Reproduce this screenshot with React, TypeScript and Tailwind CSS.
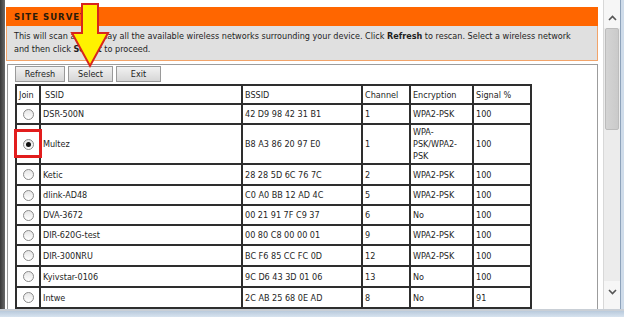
import React from "react";

const font = { fontFamily: '"DejaVu Sans Condensed", "Liberation Sans", sans-serif' };

type Row = { ssid: string; bssid: string; ch: string; enc: React.ReactNode; sig: string; h: number; sel?: boolean };

const rows: Row[] = [
  { ssid: "DSR-500N", bssid: "42 D9 98 42 31 B1", ch: "1", enc: "WPA2-PSK", sig: "100", h: 20 },
  { ssid: "Multez", bssid: "B8 A3 86 20 97 E0", ch: "1", enc: (<>WPA-<br />PSK/WPA2-<br />PSK</>), sig: "100", h: 40, sel: true },
  { ssid: "Ketic", bssid: "28 28 5D 6C 76 7C", ch: "2", enc: "WPA2-PSK", sig: "100", h: 21 },
  { ssid: "dlink-AD48", bssid: "C0 A0 BB 12 AD 4C", ch: "5", enc: "WPA2-PSK", sig: "100", h: 20 },
  { ssid: "DVA-3672", bssid: "00 21 91 7F C9 37", ch: "6", enc: "No", sig: "100", h: 20 },
  { ssid: "DIR-620G-test", bssid: "00 80 C8 00 00 01", ch: "9", enc: "WPA2-PSK", sig: "100", h: 20 },
  { ssid: "DIR-300NRU", bssid: "BC F6 85 CC FC 0D", ch: "12", enc: "WPA2-PSK", sig: "100", h: 21 },
  { ssid: "Kyivstar-0106", bssid: "9C D6 43 3D 01 06", ch: "13", enc: "No", sig: "100", h: 21 },
  { ssid: "Intwe", bssid: "2C AB 25 68 0E AD", ch: "8", enc: "No", sig: "91", h: 21 },
  { ssid: "", bssid: "", ch: "", enc: "", sig: "", h: 21 },
];

function Radio({ on }: { on?: boolean }) {
  return (
    <span className="mx-auto flex h-[11px] w-[11px] items-center justify-center rounded-full border border-[#8a8a8a] bg-gradient-to-b from-[#e6e6e6] to-white">
      {on && <span className="h-[5px] w-[5px] rounded-full bg-[#111]" />}
    </span>
  );
}

function Btn({ label, w }: { label: string; w: string }) {
  return (
    <button className={`${w} h-[16px] border border-[#9a9a9a] bg-gradient-to-b from-[#f2f2f2] to-[#d6d6d6] text-[9px] leading-none text-[#222]`}>
      {label}
    </button>
  );
}

const cell = "border-2 border-[#2e2e2e] px-[2px] py-0 text-left align-middle";

export default function App() {
  return (
    <div className="relative h-[317px] w-[624px] overflow-hidden bg-white text-[#1e1e1e]" style={font}>
      <div className="flex h-[309px]">
        <div className="w-[5px] bg-gradient-to-r from-[#3a3a3a] to-[#6a6a6a]" />
        <div className="w-[598px] overflow-hidden pl-[1px] pr-[5px] pt-[7px]">
          <div className="flex h-[19px] items-center bg-[#ff6600] pl-[8px] pt-[1px] text-[9.5px] font-bold tracking-[1px] text-[#2a1a0a]">
            SITE SURVEY
          </div>
          <div className="h-[35px] whitespace-nowrap border border-t-0 border-[#f2a46a] bg-[#e0e0e0] pl-[7px] pt-[4px] text-[9px] leading-[13px]">
            This will scan and display all the available wireless networks surrounding your device. Click <b>Refresh</b> to rescan. Select a wireless network
            <br />
            and then click <b>Select</b> to proceed.
          </div>
          <div className="ml-[1px] mt-[3px] h-[300px] border border-[#9c9c9c] pl-[7px] pt-[1px]">
            <div className="flex gap-[3px]">
              <Btn label="Refresh" w="w-[50px]" />
              <Btn label="Select" w="w-[45px]" />
              <Btn label="Exit" w="w-[45px]" />
            </div>
            <table className="mt-[2px] table-fixed border-collapse text-[9px] leading-[12px]" style={{ width: 515 }}>
              <colgroup>
                <col style={{ width: 24 }} />
                <col style={{ width: 202 }} />
                <col style={{ width: 120 }} />
                <col style={{ width: 48 }} />
                <col style={{ width: 63 }} />
                <col style={{ width: 58 }} />
              </colgroup>
              <thead>
                <tr style={{ height: 19 }}>
                  <th className={`${cell} font-normal`}>Join</th>
                  <th className={`${cell} pl-[4px] font-normal`}>SSID</th>
                  <th className={`${cell} font-normal`}>BSSID</th>
                  <th className={`${cell} font-normal`}>Channel</th>
                  <th className={`${cell} font-normal`}>Encryption</th>
                  <th className={`${cell} font-normal`}>Signal %</th>
                </tr>
              </thead>
              <tbody>
                {rows.map((r, i) => (
                  <tr key={i} style={{ height: r.h }}>
                    <td className={cell}>{r.ssid && <Radio on={r.sel} />}</td>
                    <td className={cell}>{r.ssid}</td>
                    <td className={cell}>{r.bssid}</td>
                    <td className={cell}>{r.ch}</td>
                    <td className={cell}>{r.enc}</td>
                    <td className={cell}>{r.sig}</td>
                  </tr>
                ))}
              </tbody>
            </table>
          </div>
        </div>
        <div className="flex w-[17px] flex-col border-l border-[#d8d8d8] bg-[#ececec]">
          <div className="flex h-[28px] items-end justify-center bg-[#f6f6f6] pb-[7px]">
            <svg width="9" height="6" viewBox="0 0 9 6"><path d="M1 5 L4.5 1.5 L8 5" fill="none" stroke="#555" strokeWidth="1.6" /></svg>
          </div>
          <div className="mx-[1px] h-[102px] rounded-[2px] border border-[#bcbcbc] bg-gradient-to-r from-[#d4d4d4] to-[#cacaca]" />
          <div className="flex-1" />
          <div className="flex h-[28px] items-start justify-center bg-[#f6f6f6] pt-[8px]">
            <svg width="9" height="6" viewBox="0 0 9 6"><path d="M1 1 L4.5 4.5 L8 1" fill="none" stroke="#555" strokeWidth="1.6" /></svg>
          </div>
        </div>
        <div className="w-[4px] border-l border-[#8ea3bb] bg-[#cfdcea]" />
      </div>
      <div className="h-[8px] border-t-2 border-[#c9cfd6] bg-gradient-to-b from-[#b9cadc] to-[#d7e3ef]" />

      {/* annotation: red box around selected radio */}
      <div className="absolute left-[14px] top-[129px] h-[29px] w-[28px] border-[3px] border-[#e21d1d]" />

      {/* annotation: yellow arrow */}
      <svg className="absolute left-0 top-0" width="130" height="80" viewBox="0 0 130 80">
        <path d="M82 4 L98 4 L98 33 L108 33 L90 66 L72 33 L82 33 Z" fill="#fff200" stroke="#d8261c" strokeWidth="2" strokeLinejoin="miter" />
      </svg>
    </div>
  );
}
